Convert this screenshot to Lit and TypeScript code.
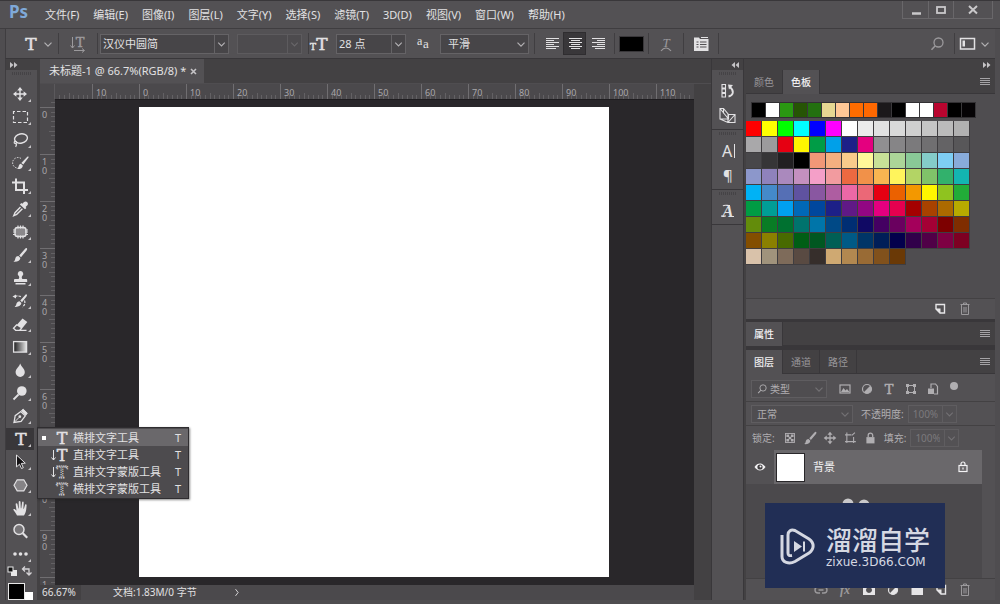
import { LitElement, html, svg, css, nothing, SVGTemplateResult } from "lit";
import { customElement } from "lit/decorators.js";
import { styleMap } from "lit/directives/style-map.js";
import { classMap } from "lit/directives/class-map.js";

type Art = SVGTemplateResult;

const menus = ["文件(F)", "编辑(E)", "图像(I)", "图层(L)", "文字(Y)", "选择(S)", "滤镜(T)", "3D(D)", "视图(V)", "窗口(W)", "帮助(H)"];

const recent = "000000 ffffff 2a9812 265404 23700f e6d892 ffc896 ff6c00 ff6800 1b191b 000000 ffffff ffffff b9052f 000000 050305".split(" ");

const swatches = [
  "ff0000 ffff00 00ff00 00ffff 0000ff ff00ff ffffff ebebeb e1e1e1 d9d9d9 cfcfcf c5c5c5 bbbbbb b1b1b1",
  "a9a8aa 9c9b9d e60012 fff500 009c46 00a0e9 1d2088 e4007f 908f91 868587 7b7a7c 706f71 646365 585759",
  "48474a 363537 222022 000000 f19877 f4b080 f9cb8b fff799 c8e197 acd598 89c997 84ccc9 7ecef4 88abda",
  "8c97cb 8f82bc aa89bd c490bf f49fc8 f29b9f ec6941 f19149 f8b551 fff45c b3d465 80c269 32b16c 13b5b1",
  "00b2f5 448aca 556fb5 5f52a0 8957a1 ae5da1 ec68a6 eb6877 e60012 eb6100 f39800 fff500 8fc31f 22ac38",
  "009c44 009e96 00a0f0 0068b7 00479d 1d2088 601986 920783 e4007f e5004f a40000 a84200 ac6a00 b7aa00",
  "638c0b 097c25 007130 00736d 0075a9 004986 002e73 100964 440062 6a005f a4005b a40035 7d0000 7f2d00",
  "834e00 8a8000 486a00 005e15 005721 005f55 005a86 003567 001e58 03004c 31004a 500047 7e0043 7d0022",
  "d9c2aa a0937c 7e6b5a 594a42 362e2b cfa972 b28850 996b35 81511c 6a3906",
].flatMap((row) => row.split(" "));

const arrowCross = svg`<path d="M10 5v10M5 10h10" stroke="currentColor" stroke-width="1.4"/><path d="M10 3l2.8 3.4H7.2zM10 17l2.8-3.4H7.2zM3 10l3.4-2.8v5.6zM17 10l-3.4-2.8v5.6z" fill="currentColor"/>`;
const brush = svg`<path d="M16.800 3.200c.8.7.2 1.600-.4 2.500L11 12.200 9.200 10.400l5.700-6.400c.7-.7 1.300-1.300 1.900-.8z" fill="currentColor"/><path d="M8.400 11l2 2c-.2 2.600-2.800 4.200-7 3.800 1.600-.9 1.600-2 2-3.500.4-1.500 1.700-2.400 3-2.300z" fill="currentColor"/>`;
const slabT = (size: number, x = 10, y = 16) => svg`<text x=${x} y=${y} font-size=${size} text-anchor="middle" class="slab" fill="currentColor" stroke="currentColor" stroke-width=".5">T</text>`;
const dottedT = svg`<text x="11" y="14" font-size="17" text-anchor="middle" class="slab" fill="none" stroke="currentColor" stroke-width=".9" stroke-dasharray="1.200 1">T</text>`;
const downArrow = svg`<path d="M2.500 3v10M.5 10.500l2 2.500 2-2.500" fill="none" stroke="currentColor"/>`;

const tools: { name: string; art: Art; more?: boolean }[] = [
  { name: "移动工具", art: arrowCross },
  { name: "矩形选框工具", art: svg`<rect x="3.500" y="4.500" width="14" height="11" fill="none" stroke="currentColor" stroke-width="1.200" stroke-dasharray="3.500 2" stroke-dashoffset="2"/>` },
  { name: "套索工具", art: svg`<ellipse cx="11" cy="8.500" rx="6.500" ry="4.600" transform="rotate(-12 11 8.500)" fill="none" stroke="currentColor" stroke-width="1.400"/><path d="M5.500 11c-2 .5-1.500 2.800.2 2.500 1.600-.4.900-2.400-.4-2M6 13.200c1 1.500.4 2.500-.4 3.600" fill="none" stroke="currentColor" stroke-width="1.200"/>` },
  { name: "快速选择工具", art: svg`<path d="M11 5.500A5.300 5.300 0 1 0 9 15" fill="none" stroke="currentColor" stroke-dasharray="1.500 1.300"/><path d="M18.500 4.500l-5.200 7-2-1.500 6-6.300c.8-.6 1.700.1 1.200.8zM10.800 10.700l2 1.700c.1 2.600-2.600 4-5.800 3.600 1.400-.8 1.300-1.600 1.700-2.900.3-1.300 1-2.200 2.100-2.400z" fill="currentColor"/>` },
  { name: "裁剪工具", art: svg`<path d="M6 2.500V14h12M2 6.500h12V18" fill="none" stroke="currentColor" stroke-width="2"/>` },
  { name: "吸管工具", art: svg`<path d="M10.500 8L5 13.700 3.800 16.600 6.700 15.300 12.400 9.800" fill="none" stroke="currentColor" stroke-width="1.400"/><path d="M17.300 3.200c1.100 1.200.7 2.500-.2 3.400l-1.500 1.400.8.900-1.400 1.400L9.900 5.400 11.300 4l1 .8 1.500-1.500c1-.9 2.400-1.100 3.500-.1z" fill="currentColor"/>` },
  { name: "修补工具", art: svg`<rect x="5" y="5.500" width="11" height="9" rx="2.500" fill="#8a888b" stroke="currentColor" stroke-width="1.400"/><path d="M8 3.500v3M10.500 3.500v3M13 3.500v3M8 13.500v3M10.500 13.500v3M13 13.500v3M3 8h3M3 10h3M3 12.500h3M15 8h3M15 10h3M15 12.500h3" stroke="currentColor" stroke-width="1.200"/>` },
  { name: "画笔工具", art: brush },
  { name: "仿制图章工具", art: svg`<path d="M10.500 3a2.800 2.800 0 0 1 1.700 5c-.7 1-.5 2 .2 3H16c.8 0 1.200.5 1.200 1.200V14H4v-1.800C4 11.500 4.400 11 5.200 11h3.400c.7-1 .9-2 .2-3a2.800 2.800 0 0 1 1.700-5zM5.500 15h10v1.500h-10z" fill="currentColor"/>` },
  { name: "历史记录画笔工具", art: svg`<path d="M16.600 3.500c.8.7.2 1.600-.3 2.300L12 11.300l-1.700-1.700 4.700-5.300c.5-.6 1.100-1.200 1.600-.8zM9.500 10.200l1.900 1.900c-.2 2.600-3 4.200-6.800 3.800 1.600-.9 1.500-2 1.900-3.300.4-1.500 1.700-2.400 3-2.400zM2.500 5.500L6 3.500v4z" fill="currentColor"/><path d="M5 5.500c2-.8 4-.7 6 .2M14.500 9.500c1 2.500 0 5-2 6.500" fill="none" stroke="currentColor" stroke-width="1.200" stroke-dasharray="2.500 1"/>` },
  { name: "橡皮擦工具", art: svg`<path d="M12.500 4.500l4.800 3.600-5.500 6.600-5.300-3.500z" fill="currentColor"/><path d="M7 10.500l-3.500 3.800 2.200 2h4l2-2.300M9 16.300h7.500" fill="none" stroke="currentColor" stroke-width="1.300"/>` },
  { name: "渐变工具", art: svg`<defs><linearGradient id="ramp"><stop offset="0" stop-color="#1b1a1c"/><stop offset="1" stop-color="#e6e6e6"/></linearGradient></defs><rect x="3.600" y="4.600" width="13" height="10.500" fill="url(#ramp)" stroke="currentColor" stroke-width="1.300"/>` },
  { name: "模糊工具", art: svg`<path d="M10.200 3.500c.9 3 4.600 5.300 4.600 8.800a4.600 4.600 0 0 1-9.200 0c0-3.500 3.800-5.800 4.600-8.800z" fill="currentColor"/>` },
  { name: "减淡工具", art: svg`<circle cx="11.800" cy="8" r="4.800" fill="currentColor"/><path d="M8.500 11.500L3.500 16.500" stroke="currentColor" stroke-width="1.800"/>` },
  { name: "钢笔工具", art: svg`<path d="M4 16.500l1.200-6.800 5.600-4.200 4.500 4.400-4.200 5.400z" fill="none" stroke="currentColor" stroke-width="1.300"/><path d="M4 16.500l5-5M11.500 4.500l1.800-1.300 4 4-1.500 2z" fill="currentColor" stroke="currentColor"/><circle cx="9.800" cy="10.700" r="1.400" fill="currentColor"/>` },
  { name: "横排文字工具", art: slabT(17, 11, 16) },
  { name: "路径选择工具", art: svg`<path d="M6.500 3l8.800 8.200-4 .2 2 4.300-1.800.8-2-4.300-3 2.700z" fill="#141214" stroke="currentColor"/>` },
  { name: "多边形工具", art: svg`<path d="M7.200 4.800h6.600l3.200 5.500-3.200 5.500H7.200L4 10.300z" fill="#858386" stroke="currentColor" stroke-width="1.200"/>` },
  { name: "抓手工具", art: svg`<path d="M7 17.500C6 15 3.800 12.800 3.300 11.500c.8-.9 1.800-.4 3.200 1.200L5.600 5.800c.6-1 1.600-.8 1.800.1l1 4.500h.4L8.700 3.700c.3-1 1.600-1 1.800 0l.3 6.500h.5l.8-6c.3-1 1.600-.8 1.600.2l-.3 6.300h.5l1.200-4c.5-.9 1.500-.5 1.500.4-.2 4-.5 7.500-2.600 10.400z" fill="currentColor"/>` },
  { name: "缩放工具", art: svg`<circle cx="9" cy="8.500" r="5" fill="#767477" stroke="currentColor" stroke-width="1.500"/><path d="M12.800 12.200l4.400 4.600" stroke="currentColor" stroke-width="2.200"/>`, more: false },
  { name: "更多工具", art: svg`<circle cx="5" cy="10" r="1.800" fill="currentColor"/><circle cx="10.500" cy="10" r="1.800" fill="currentColor"/><circle cx="16" cy="10" r="1.800" fill="currentColor"/>` },
];

const typeTools: { name: string; art: Art; on?: boolean }[] = [
  { name: "横排文字工具", art: slabT(16, 11, 14), on: true },
  { name: "直排文字工具", art: svg`${downArrow}${slabT(16, 11, 14)}` },
  { name: "直排文字蒙版工具", art: svg`${downArrow}${dottedT}` },
  { name: "横排文字蒙版工具", art: dottedT },
];

const icons = {
  trash: svg`<path d="M5.500 5.500h9M8.500 5V4h3v1M6.500 6v9.500h7V6M9 8v5.500M11 8v5.500" fill="none" stroke="currentColor" stroke-width="1"/>`,
  page: svg`<path d="M6 5.500h8.500V14H10L6 10z" fill="none" stroke="currentColor" stroke-width="1.400"/><path d="M5.500 9.500h5v5z" fill="currentColor"/>`,
  lock: svg`<rect x="6" y="9" width="9" height="7" fill="currentColor"/><path d="M8 9V7a2.500 2.500 0 0 1 5 0v2" fill="none" stroke="currentColor" stroke-width="1.400"/>`,
  lockOutline: svg`<rect x="6" y="8.500" width="8" height="6" fill="none" stroke="currentColor" stroke-width="1.200"/><path d="M8 8.500V7a2 2 0 0 1 4 0v1.500M10 10.500v2" fill="none" stroke="currentColor" stroke-width="1.200"/>`,
  eye: svg`<path d="M4.500 10c3-4.600 8-4.600 11 0-3 4.600-8 4.600-11 0z" fill="currentColor"/><circle cx="10" cy="10" r="2.600" fill="#403e41"/><circle cx="10.500" cy="9.500" r="1" fill="currentColor"/>`,
  menu: svg`<path d="M5 6.500h10M5 8.500h10M5 10.500h10M5 12.500h10" stroke="currentColor" stroke-width="1"/>`,
  chevron: svg`<path d="M5 8l5 5 5-5" fill="none" stroke="currentColor" stroke-width="1.700"/>`,
  search: svg`<circle cx="11.500" cy="8.500" r="4.500" fill="none" stroke="currentColor" stroke-width="1.300"/><path d="M8.300 11.800L4.500 15.800" stroke="currentColor" stroke-width="1.500"/>`,
  image: svg`<rect x="5" y="6" width="10" height="8" fill="none" stroke="currentColor" stroke-width="1.200"/><path d="M6 13l2.500-4 2 2.500 1.500-1.500 2.500 3z" fill="currentColor"/>`,
  adjust: svg`<circle cx="10" cy="10" r="4.500" fill="none" stroke="currentColor" stroke-width="1.200"/><path d="M13.200 6.800a4.500 4.500 0 0 1-6.400 6.400z" fill="currentColor"/>`,
  type: slabT(13, 10, 15),
  shape: svg`<rect x="6.500" y="6.500" width="7" height="7" fill="none" stroke="currentColor"/><path d="M5 5h3v3H5zM12 5h3v3h-3zM5 12h3v3H5zM12 12h3v3h-3z" fill="currentColor"/>`,
  smart: svg`<path d="M8 9V5h4.500L14.500 7.500V15H11" fill="none" stroke="currentColor" stroke-width="1.200"/><rect x="5" y="9.500" width="6" height="5.500" fill="currentColor"/>`,
  pixels: svg`<rect x="5" y="5" width="10" height="10" fill="none" stroke="currentColor"/><path d="M6 6h3v3H6zM11 6h3v3h-3zM8.500 8.500h3v3h-3zM6 11h3v3H6zM11 11h3v3h-3z" fill="currentColor"/>`,
  artboard: svg`<path d="M6.500 4v11.500M14 9v6.500M4.500 6.500h7M4.500 14h12M12 7l3.500-3" fill="none" stroke="currentColor" stroke-width="1.200"/>`,
  link: svg`<path d="M9 7H7a3 3 0 0 0 0 6h2M11 7h2a3 3 0 0 1 0 6h-2M7.500 10h5" fill="none" stroke="currentColor" stroke-width="1.400"/>`,
  fx: svg`<text x="10" y="14" font-size="12" font-style="italic" text-anchor="middle" class="serif" fill="currentColor">fx</text>`,
  mask: svg`<path d="M4 5h12v10H4zM10 7a3 3 0 1 0 .01 0z" fill="currentColor" fill-rule="evenodd"/>`,
  folder: svg`<path d="M4.500 6h4l1.500 1.500h6V15H4.500z" fill="currentColor"/>`,
  history: svg`<path d="M4 3.500h3.500v3.500H4zM4 8h3.500v3.500H4zM4 12.500h3.500V16H4z" fill="none" stroke="currentColor" stroke-width="1.100"/><path d="M10.500 15.500c5-1 6-5.500 1.500-9.500" fill="none" stroke="currentColor" stroke-width="1.800"/><path d="M10 3.500l5 .5-4 4.500z" fill="currentColor"/>`,
  library: svg`<path d="M2 2.500h3.500l5 6v4.500H2zM2 2.500l8.500 10.500M5.500 2.500v5M10 8.500h7v8h-7zM10 16.500l7-8M2 13l8 3.500" fill="none" stroke="currentColor" stroke-width="1.100"/>`,
  glyphA: svg`<text x="4" y="16" font-size="16" class="sans" fill="currentColor">A</text><path d="M16.500 3v14" stroke="currentColor"/>`,
  pilcrow: svg`<text x="10" y="15" font-size="15" text-anchor="middle" class="sans" fill="currentColor">¶</text>`,
  scriptA: svg`<text x="10" y="16" font-size="17" font-style="italic" text-anchor="middle" class="serif" fill="currentColor">A</text><path d="M3 15h5M12 15.500h4M5 5c1-1.500 4-.5 7-.5" fill="none" stroke="currentColor" stroke-width="1.200"/>`,
  orient: svg`${slabT(13, 12, 13)}<path d="M4.500 3v11M2.500 11.500l2 2.500 2-2.500M6 16.500h10M14 14.500l2.500 2-2.500 2" fill="none" stroke="currentColor"/>`,
  size: svg`${slabT(17, 13, 16)}${slabT(9, 4, 16)}`,
  aa: svg`<text x="4" y="11" font-size="12" class="plain" fill="currentColor">a</text><text x="10" y="14" font-size="13" class="plain" fill="currentColor">a</text>`,
  left: svg`<path d="M4 4.500h13M4 6.500h8M4 8.500h13M4 10.500h8M4 12.500h13M4 14.500h10" stroke="currentColor" stroke-width="1"/>`,
  center: svg`<path d="M4 4.500h13M6 6.500h9M4 8.500h13M6 10.500h9M4 12.500h13M6 14.500h9" stroke="currentColor" stroke-width="1"/>`,
  right: svg`<path d="M4 4.500h13M9 6.500h8M4 8.500h13M9 10.500h8M4 12.500h13M7 14.500h10" stroke="currentColor" stroke-width="1"/>`,
  warp: svg`<text x="10" y="13" font-size="13" font-style="italic" text-anchor="middle" class="plain" fill="currentColor">T</text><path d="M5 17c3-4 7-4 10 0" fill="none" stroke="currentColor" stroke-width="1.200"/>`,
  panel: svg`<path d="M3 3.500h5l1 1.500h8.500v12H3z" fill="currentColor"/><path d="M5.500 8h2M9 8h6.500M5.500 10.500h2M9 10.500h6.500M5.500 13h2M9 13h6.500" stroke="#535154" stroke-width="1.200"/><path d="M10 3.500h7" stroke="currentColor"/>`,
  workspace: svg`<rect x="3.500" y="4.500" width="14" height="10.500" fill="none" stroke="currentColor" stroke-width="1.500"/><path d="M5.500 6.500h2.500v6H5.500z" fill="currentColor"/>`,
  next: svg`<path d="M8 5.500l3.500 4.500L8 14.500" fill="none" stroke="currentColor" stroke-width="1.200"/>`,
};

const icon = (art: Art, cls = "") => html`<svg class="icon ${cls}" viewBox="0 0 20 20" aria-hidden="true">${art}</svg>`;
const iconButton = (label: string, art: Art, cls = "") => html`<button class="bare ${cls}" aria-label=${label}>${icon(art)}</button>`;
const dropdown = (label: string, value: string, cls: string, disabled = false) => html`
  <div class="drop ${cls}"><select aria-label=${label} ?disabled=${disabled}><option>${value}</option></select>${icon(icons.chevron, "chev")}</div>`;

const ticks = [1, 2, 3, 4, 5, 6, 7, 8, 9];

@customElement("ps-ruler")
class PsRuler extends LitElement {
  static properties = { vertical: { type: Boolean, reflect: true } };
  declare vertical: boolean;

  static styles = css`
    :host { display: flex; overflow: hidden; background: #4b494c; color: #a9a7aa; font: 9px/9px "Noto Sans", sans-serif; min-width: 0; min-height: 0; }
    :host([vertical]) { flex-direction: column; width: 15px; }
    .cell { flex: none; width: 47px; height: 15px; display: grid; }
    .cell > * { grid-area: 1 / 1; }
    .cell.lead { width: 37px; justify-content: end; overflow: hidden; }
    .label { padding: 4px 0 0 4px; }
    :host([vertical]) .cell { width: 15px; height: 47px; }
    :host([vertical]) .cell.lead { height: 8px; align-content: end; justify-content: start; }
    :host([vertical]) .label { padding: 3px 0 0 2px; width: 6px; word-break: break-all; white-space: normal; }
    svg { display: block; }
    .minor { stroke: #636164; }
  `;

  private marks() {
    return this.vertical
      ? html`<svg width="15" height="47" viewBox="0 0 15 47" stroke="#706e71">
          <path d="M0 .5H15" />${ticks.map((t) => svg`<path class="minor" d="M${t === 5 ? 9 : 11} ${Math.round(t * 4.7) + 0.5}H15" />`)}</svg>`
      : html`<svg width="47" height="15" viewBox="0 0 47 15" stroke="#706e71">
          <path d="M.5 0V15" />${ticks.map((t) => svg`<path class="minor" d="M${Math.round(t * 4.7) + 0.5} ${t === 5 ? 9 : 11}V15" />`)}</svg>`;
  }

  render() {
    const labels = this.vertical ? [0, 10, 20, 30, 40, 50, 60, 70, 80, 90, 100] : [10, 0, 10, 20, 30, 40, 50, 60, 70, 80, 90, 100, 110];
    return html`<div class="cell lead">${this.marks()}</div>
      ${labels.map((n) => html`<div class="cell">${this.marks()}<span class="label">${n}</span></div>`)}`;
  }
}

@customElement("app-root")
class AppRoot extends LitElement {
  static styles = css`
    :host { display: flex; flex-direction: column; height: 100vh; box-sizing: border-box; padding: 0 5px 4px; overflow: hidden; position: relative;
      background: #4f4d50; color: #e2e1e3; font: 11px/16px "Noto Sans", "Noto Sans CJK SC", sans-serif; white-space: nowrap; border-top: 1px solid #39373a; }
    * { box-sizing: border-box; }
    button, select, input { font: inherit; color: inherit; margin: 0; padding: 0; border: 0; border-radius: 0; background: none; }
    select { appearance: none; opacity: 1; }
    .icon { width: 20px; height: 20px; display: block; flex: none; }
    .serif { font-family: "Liberation Serif", serif; font-weight: bold; }
    .slab { font-family: "DejaVu Serif", serif; }
    .sans { font-family: "Noto Sans", sans-serif; }
    .plain { font-family: "Liberation Serif", serif; }
    .bare { display: grid; place-items: center; flex: none; }
    .grow { flex: 1; }
    .dim { color: #9b999c; }

    .title { height: 28px; flex: none; display: flex; align-items: center; border-bottom: 1px solid #3f3d40; background: #535154; margin: 0 -5px; padding-left: 9px; }
    .brand { font-size: 17px; font-weight: bold; line-height: 22px; color: #7fa9d8; width: 36px; }
    .title .brand { align-self: flex-start; }
    .menus { display: flex; gap: 14px; }
    .controls { display: flex; align-self: flex-start; margin-right: 7px; border: 1px solid #69676a; border-top: 0; }
    .controls button { width: 25px; height: 17px; display: grid; place-items: center; border-left: 1px solid #69676a; color: #c9c8ca; }
    .controls button:first-child { border-left: 0; }
    .controls button:last-child { width: 39px; }
    .controls svg { width: 12px; height: 12px; }

    .options { height: 30px; flex: none; display: flex; align-items: center; background: #535154; border-bottom: 1px solid #39373a; border-left: 1px solid #3f3d40; }
    .sep { width: 1px; height: 21px; background: #403e41; flex: none; }
    .drop { display: grid; align-items: center; background: #474548; border: 1px solid #656366; height: 20px; flex: none; }
    .drop > * { grid-area: 1 / 1; }
    .drop select { width: 100%; height: 100%; padding: 0 2px; }
    .chev { width: 14px; height: 18px; color: #b3b1b4; }
    .drop .chev { justify-self: end; pointer-events: none; }
    .split .chev { border-left: 1px solid #656366; }
    .off { border-color: #5d5b5e; background: #4d4b4e; }
    .off .chev { color: #69676a; border-color: #5d5b5e; }
    .family { width: 129px; margin: 0 8px 0 2px; }
    .style { width: 65px; margin-right: 6px; }
    .size { width: 70px; margin-left: 7px; }
    .smooth { width: 89px; margin-right: 5px; }
    .smooth select { padding-left: 7px; }
    .pick { width: 52px; grid-template-columns: 20px 14px; place-content: center start; color: #e2e1e3; padding-left: 15px; }
    .gap { width: 5px; flex: none; }
    .w38 { width: 38px; }
    .w35 { width: 34px; }
    .w23 { width: 23px; height: 21px; }
    .edge { margin-right: 3px; }
    .pressed { background: #39373a; outline: 1px solid #2f2d30; width: 21px; margin: 0 1px; }
    .ink { width: 25px; height: 16px; background: #000; border: 1px solid #39373a; margin: 0 4px; }

    .main { flex: 1; min-height: 0; display: flex; background: #434143; }
    .strip { height: 11px; flex: none; background: #434143; color: #c5c3c6; display: flex; align-items: center; padding: 0 4px; }
    .strip svg { width: 8px; height: 6px; }
    .end { justify-content: flex-end; }
    .side { width: 32px; flex: none; display: flex; flex-direction: column; background: #535154; border-left: 1px solid #3f3d40; }
    .grip { height: 3px; margin: 2px 6px 7px; background: repeating-linear-gradient(90deg, #454346 0 1px, #535154 1px 2px); flex: none; }
    .tool { position: relative; height: 23px; flex: none; display: grid; place-items: center start; }
    .tool > button { width: 28px; height: 22px; display: block; }
    .tool svg.cell { width: 28px; height: 22px; display: block; }
    .tool.active > button { background: #39373a; }
    .flyout { position: absolute; left: 31px; top: 0; z-index: 3; width: 152px; margin: 0; padding: 1px 0; background: #4d4b4e; border: 1px solid #2f2d30; box-shadow: 1px 1px 2px #2228; }
    .flyout button { width: 100%; height: 17px; display: grid; grid-template-columns: 13px 22px 1fr auto; align-items: center; text-align: left; padding-right: 7px; }
    .flyout button.on { background: #6a686b; }
    .flyout svg { width: 22px; height: 16px; display: block; }
    .dot { width: 4px; height: 4px; background: #fff; margin-left: 4px; }
    .minis { display: flex; justify-content: space-between; padding: 0 5px 0 1px; height: 16px; flex: none; }
    .minis svg { width: 11px; height: 12px; display: block; }
    .inks { display: flex; align-items: flex-end; padding: 2px 0 0 2px; flex: none; }
    .front { width: 17px; height: 17px; background: #000; border: 1px solid #e8e8e8; }
    .back { width: 8px; height: 8px; background: #fff; }

    .doc { flex: 1; min-width: 0; margin-left: 3px; margin-right: 17px; display: flex; flex-direction: column; background: #4b494c; }
    .tabs { height: 25px; flex: none; display: flex; background: #434143; border-bottom: 1px solid #4f4d50; margin-right: -17px; }
    .tabs .tab { background: #535154; display: flex; align-items: center; gap: 3px; padding: 0 6px 0 9px; }
    .tabs .tab svg { width: 9px; height: 9px; }
    .rules { display: flex; flex: none; height: 15px; }
    .corner { width: 15px; flex: none; border-right: 1px solid #5b595c; background: #4b494c; }
    .rules ps-ruler { flex: 1; }
    .stage { flex: 1; min-height: 0; display: flex; }
    .board { flex: 1; min-width: 0; overflow: hidden; background: #29272a; padding: 7px 0 0 84px; border-top: 1px solid #1f1d20; }
    .paper { width: 470px; height: 470px; background: #fff; }
    .status { height: 15px; flex: none; display: flex; align-items: center; background: #4b494c; line-height: 15px; }
    .status input { width: 41px; height: 15px; background: #434143; padding: 0 0 0 2px; }
    .status span { padding: 0 30px 0 32px; }
    .status .icon { height: 15px; }
    .small { font-size: 10px; }

    .dock { width: 33px; flex: none; display: flex; flex-direction: column; background: #535154; border-left: 1px solid #39373a; border-right: 1px solid #39373a; margin-right: 2px; }
    .group { display: flex; flex-direction: column; align-items: center; border-bottom: 1px solid #39373a; padding-bottom: 1px; }
    .group .grip { width: 18px; margin: 2px 0 3px; }
    .group .bare { height: 25px; }

    .panels { width: 249px; flex: none; display: flex; flex-direction: column; font-size: 10px; background: #39373a; }
    .head { height: 24px; flex: none; display: flex; background: #434143; }
    .head button { padding: 0 8px; color: #98969a; border-right: 1px solid #39373a; border-bottom: 1px solid #39373a; }
    .head .here { background: #535154; color: #f0eff1; border-bottom: 0; font-weight: 500; }
    .head .fill { flex: 1; border-bottom: 1px solid #39373a; display: flex; justify-content: flex-end; align-items: center; color: #a5a3a6; }
    .colors { height: 225px; display: flex; flex-direction: column; background: #4f4d50; flex: none; padding-top: 8px; }
    .recent { display: flex; margin-left: 5px; background: #323033; padding: 1px 0 1px 1px; align-self: flex-start; }
    .recent button { width: 14px; height: 14px; border-right: 1px solid #39373a; }
    .grid { display: grid; grid-template-columns: repeat(14, 16px); margin-top: 3px; }
    .grid button { height: 16px; border: solid #3f3d40; border-width: 0 1px 1px 0; }
    .bar { display: flex; align-items: center; justify-content: flex-end; height: 21px; background: #535154; border-top: 1px solid #434143; margin-top: auto; padding-right: 20px; gap: 5px; flex: none; color: #9b999c; }
    .lit { color: #e6e5e7; }
    .props { margin: 3px 0 4px; }
    .layers { flex: 1; min-height: 0; display: flex; flex-direction: column; background: #535154; color: #b0aeb1; }
    .row { height: 24px; flex: none; display: flex; align-items: center; padding-left: 5px; border-bottom: 1px solid #434143; }
    .row.first { height: 28px; padding-top: 3px; }
    .row .drop { height: 18px; background: #4f4d50; border-color: #5f5d60; }
    .row .chev { height: 16px; color: #737174; }
    .kind { width: 76px; margin-right: 7px; }
    .row .kind select { padding-left: 18px; }
    .kind .glass { width: 14px; height: 14px; margin-left: 3px; pointer-events: none; }
    .row .bare { width: 22px; }
    .lamp { width: 8px; height: 8px; border-radius: 4px; background: #b0aeb1; margin: 0 0 6px 6px; }
    .mode { width: 102px; margin-right: 8px; }
    .row .mode select { padding-left: 5px; }
    .field { display: flex; align-items: center; gap: 4px; }
    .pct { display: flex; border: 1px solid #5f5d60; height: 18px; color: #7b797c; }
    .pct input { width: 33px; padding: 0 4px; }
    .pct .chev { border-left: 1px solid #5f5d60; }
    .row.locks { padding-left: 6px; border-bottom: 0; }
    .locks > span { margin-right: 5px; }
    .row.locks .bare { width: 20px; }
    .locks .field { margin-left: 4px; }
    .locks .icon:not(.chev) { width: 18px; height: 18px; }
    .list { flex: 1; min-height: 0; background: #4b494c; margin: 0 13px 0 0; display: flex; flex-direction: column; }
    .layer { display: flex; height: 34px; flex: none; align-items: stretch; background: #535154; font-size: 11px; color: #f4f3f5; }
    .layer .bare { width: 28px; }
    .card { flex: 1; background: #6a686b; display: flex; align-items: center; padding: 0 9px 0 2px; gap: 8px; }
    .thumb { width: 29px; height: 29px; background: #fff; border: 1px solid #29272a; }
    .foot { height: 22px; padding-right: 20px; gap: 4px; margin: 0; }

    .mark { position: absolute; right: 55px; bottom: 16px; z-index: 4; width: 180px; height: 85px; background: #212e55; color: #d5d8e2; display: flex; align-items: center; gap: 10px; padding-left: 13px; }
    .mark svg { width: 38px; height: 38px; flex: none; }
    .words { display: grid; }
    .big { font: 500 26px/32px "Noto Sans CJK SC", sans-serif; }
    .site { font: 12px/14px "DejaVu Sans", sans-serif; }
    .blobs { position: absolute; right: 129px; bottom: 98px; width: 30px; height: 8px; z-index: 3; }
  `;

  private tool(t: (typeof tools)[number]) {
    const active = t.name === "横排文字工具";
    return html`<div class=${classMap({ tool: true, active })}>
      <button aria-label=${t.name}>
        <svg class="cell" viewBox="0 0 28 22" aria-hidden="true"><g transform="translate(4 1)">${t.art}</g>${t.more === false ? nothing : svg`<path d="M25 16v3h-3z" fill="#c5c3c6"/>`}</svg>
      </button>
      ${active
        ? html`<div class="flyout" role="menu">${typeTools.map((m) => html`
            <button role="menuitem" class=${m.on ? "on" : ""}><span>${m.on ? html`<div class="dot"></div>` : nothing}</span><svg viewBox="0 0 22 16" aria-hidden="true">${m.art}</svg><span>${m.name}</span><span>T</span></button>`)}</div>`
        : nothing}
    </div>`;
  }

  private chip(hex: string) {
    return html`<button aria-label="#${hex}" style=${styleMap({ background: `#${hex}` })}></button>`;
  }

  private percent(id: string, label: string) {
    return html`<div class="field"><label for=${id}>${label}</label><div class="pct"><input id=${id} value="100%" />${icon(icons.chevron, "chev")}</div></div>`;
  }

  private fill() {
    return html`<div class="fill">${icon(icons.menu)}</div>`;
  }

  render() {
    return html`
      <header class="title">
        <span class="brand">Ps</span>
        <nav class="menus">${menus.map((m) => html`<button>${m}</button>`)}</nav>
        <span class="grow"></span>
        <div class="controls">
          <button aria-label="最小化"><svg viewBox="0 0 12 12"><path d="M2 9.500h9" stroke="currentColor" stroke-width="2.500"/></svg></button>
          <button aria-label="最大化"><svg viewBox="0 0 12 12"><rect x="2" y="3" width="8" height="6" fill="none" stroke="currentColor" stroke-width="1.800"/></svg></button>
          <button aria-label="关闭"><svg viewBox="0 0 12 12"><path d="M2 2l8 7.500M10 2L2 9.500" stroke="currentColor" stroke-width="2"/></svg></button>
        </div>
      </header>

      <div class="options">
        <button class="bare pick" aria-label="横排文字工具">${icon(slabT(17, 10, 16))}${icon(icons.chevron, "chev")}</button>
        <i class="sep"></i>
        ${iconButton("切换文本取向", icons.orient, "w38 dim")}
        <i class="sep"></i>
        ${dropdown("字体", "汉仪中圆简", "family split")}
        ${dropdown("字体样式", "", "style split off", true)}
        <i class="sep"></i>
        <div class="bare">${icon(icons.size)}</div>
        ${dropdown("字体大小", "28 点", "size split")}
        <div class="bare w35">${icon(icons.aa)}</div>
        ${dropdown("消除锯齿", "平滑", "smooth")}
        <i class="sep"></i>
        <span class="gap"></span>
        ${iconButton("左对齐", icons.left, "w23")}
        ${iconButton("居中对齐", icons.center, "w23 pressed")}
        ${iconButton("右对齐", icons.right, "w23")}
        <span class="gap"></span>
        <i class="sep"></i>
        <button class="ink" aria-label="文本颜色"></button>
        <i class="sep"></i>
        ${iconButton("文字变形", icons.warp, "w35 dim")}
        <i class="sep"></i>
        ${iconButton("字符面板", icons.panel, "w35")}
        <i class="sep"></i>
        <span class="grow"></span>
        ${iconButton("搜索", icons.search, "w35 dim")}
        <i class="sep"></i>
        ${iconButton("工作区", icons.workspace, "w23")}
        ${icon(icons.chevron, "chev edge")}
      </div>

      <div class="main">
        <aside class="side">
          <div class="strip"><svg viewBox="0 0 8 6"><path d="M0 0l3.500 3L0 6zM4 0l3.500 3L4 6z" fill="currentColor"/></svg></div>
          <div class="grip"></div>
          ${tools.map((t) => this.tool(t))}
          <div class="minis">
            <svg viewBox="0 0 11 12"><rect x="4" y="5" width="6" height="6" fill="#e8e8e8"/><rect x="1" y="2" width="5" height="5" fill="#111" stroke="#e8e8e8"/></svg>
            <svg viewBox="0 0 11 12"><path d="M2 4h6v5M4 1.500L1.500 4 4 6.500M5.500 7.500L8 10l2.500-2.500" fill="none" stroke="#d5d3d6" stroke-width="1.300"/></svg>
          </div>
          <div class="inks"><button class="front" aria-label="前景色"></button><button class="back" aria-label="背景色"></button></div>
        </aside>

        <main class="doc">
          <div class="tabs"><div class="tab"><span>未标题-1 @ 66.7%(RGB/8) *</span><button class="bare" aria-label="关闭文档"><svg viewBox="0 0 9 9"><path d="M2 2l5 5M7 2L2 7" stroke="#c5c3c6" stroke-width="1.600"/></svg></button></div></div>
          <div class="rules"><div class="corner"></div><ps-ruler></ps-ruler></div>
          <div class="stage">
            <ps-ruler vertical></ps-ruler>
            <div class="board"><div class="paper"></div></div>
          </div>
          <footer class="status small"><input aria-label="缩放比例" value="66.67%" /><span>文档:1.83M/0 字节</span>${icon(icons.next)}</footer>
        </main>

        <aside class="dock">
          <div class="strip end"><svg viewBox="0 0 8 6"><path d="M4 0L.5 3 4 6zM8 0L4.500 3 8 6z" fill="currentColor"/></svg></div>
          <div class="group"><div class="grip"></div>${iconButton("历史记录", icons.history)}${iconButton("库", icons.library)}</div>
          <div class="group"><div class="grip"></div>${iconButton("字符", icons.glyphA)}${iconButton("段落", icons.pilcrow)}</div>
          <div class="group"><div class="grip"></div>${iconButton("字形", icons.scriptA)}</div>
        </aside>

        <aside class="panels">
          <div class="strip end"><svg viewBox="0 0 8 6"><path d="M0 0l3.500 3L0 6zM4 0l3.500 3L4 6z" fill="currentColor"/></svg></div>
          <div class="head"><button>颜色</button><button class="here">色板</button>${this.fill()}</div>
          <section class="colors">
            <div class="recent">${recent.map((c) => this.chip(c))}</div>
            <div class="grid">${swatches.map((c) => this.chip(c))}</div>
            <div class="bar">${iconButton("新建色板", icons.page, "lit")}${iconButton("删除色板", icons.trash)}</div>
          </section>
          <div class="head props"><button class="here">属性</button>${this.fill()}</div>
          <div class="head"><button class="here">图层</button><button>通道</button><button>路径</button>${this.fill()}</div>
          <section class="layers">
            <div class="row first">
              <div class="drop kind"><select aria-label="筛选"><option>类型</option></select>${icon(icons.search, "glass")}${icon(icons.chevron, "chev")}</div>
              ${iconButton("像素图层", icons.image)}${iconButton("调整图层", icons.adjust)}${iconButton("文字图层", icons.type)}${iconButton("形状图层", icons.shape)}${iconButton("智能对象", icons.smart)}
              <button class="lamp" aria-label="打开筛选"></button>
            </div>
            <div class="row">${dropdown("混合模式", "正常", "mode")}${this.percent("opacity", "不透明度:")}</div>
            <div class="row locks">
              <span>锁定:</span>
              ${iconButton("透明像素", icons.pixels)}${iconButton("图像像素", brush)}${iconButton("位置", arrowCross)}${iconButton("画板", icons.artboard)}${iconButton("全部", icons.lock)}
              ${this.percent("fill", "填充:")}
            </div>
            <div class="list">
              <div class="layer">${iconButton("可见性", icons.eye)}<div class="card"><div class="thumb"></div><span class="grow">背景</span>${icon(icons.lockOutline)}</div></div>
            </div>
            <div class="bar foot">
              ${iconButton("链接图层", icons.link)}${iconButton("图层样式", icons.fx)}${iconButton("图层蒙版", icons.mask, "lit")}${iconButton("调整", icons.adjust, "lit")}${iconButton("新建组", icons.folder, "lit")}${iconButton("新建图层", icons.page, "lit")}${iconButton("删除图层", icons.trash)}
            </div>
          </section>
        </aside>
      </div>

      <svg class="blobs" viewBox="0 0 30 8" aria-hidden="true"><circle cx="7" cy="6" r="5.500" fill="#c9c8ca"/><circle cx="23" cy="7" r="5.500" fill="#c9c8ca"/></svg>
      <div class="mark">
        <svg viewBox="0 0 38 38" fill="none" stroke="currentColor" aria-hidden="true">
          <path d="M10 8c0-4 3-6 7-4.500L31 12c5.500 4 5.500 10 0 14L17 34.500c-6 3-13 1-13-5V8" stroke-width="3"/>
          <path d="M10 8v18c0 2 1 3 4 2.500" stroke-width="3"/><path d="M16 14l8 5.500-8 5.500z" fill="currentColor" stroke="none"/><path d="M26 14.500v10" stroke-width="2"/>
        </svg>
        <div class="words"><span class="big">溜溜自学</span><span class="site">zixue.3D66.COM</span></div>
      </div>`;
  }
}
